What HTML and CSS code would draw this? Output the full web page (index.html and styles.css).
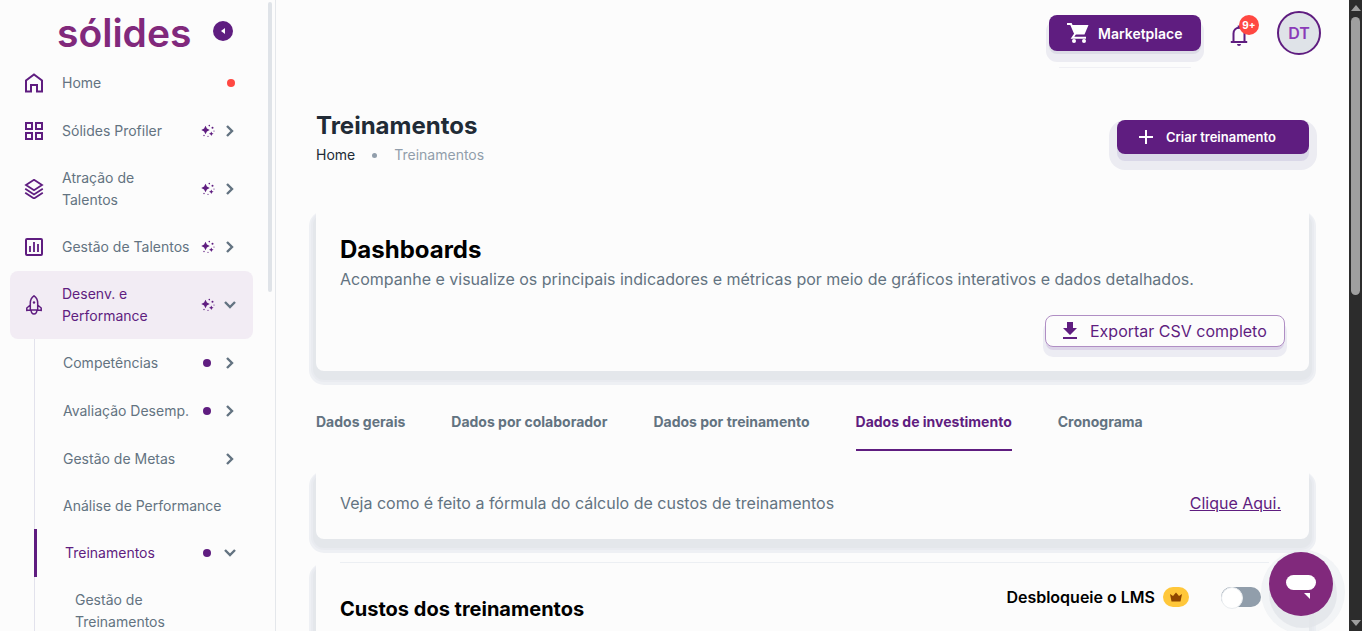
FILE: index.html
```html
<!DOCTYPE html>
<html lang="pt-BR">
<head>
<meta charset="utf-8">
<title>Treinamentos</title>
<link rel="stylesheet" href="styles.css">
</head>
<body>
<svg class="defs" aria-hidden="true">
  <symbol id="sparkle" viewBox="0 0 14 14">
    <path d="M4.500 1.800 5.900 4.600 8.700 6 5.900 7.400 4.500 10.200 3.100 7.400.3 6 3.100 4.600z" fill="currentColor"/>
    <path d="M10.300 7.500 11 9.100 12.600 9.800 11 10.500 10.300 12.100 9.600 10.500 8 9.800 9.600 9.100z" fill="currentColor"/>
    <circle cx="8.300" cy="1.600" r=".8" fill="currentColor"/><circle cx="11.500" cy="3.800" r="1" fill="currentColor"/><circle cx="3" cy="11.500" r=".7" fill="currentColor"/><circle cx="7" cy="12.300" r=".6" fill="currentColor"/><circle cx="13" cy="7" r=".6" fill="currentColor"/>
  </symbol>
  <symbol id="chevron" viewBox="0 0 14 14"><path d="m4 2 5 5-5 5" fill="none" stroke="currentColor" stroke-width="2.400"/></symbol>
</svg>

<aside class="sidebar">
  <div class="brand">
    <a class="logo" href="#">sólides</a>
    <button class="collapse" type="button" aria-label="Recolher menu"><svg viewBox="0 0 20 20"><path d="M12 7v6L8 10z" fill="#fff"/></svg></button>
  </div>
  <nav class="menu">
    <a class="item" href="#">
      <svg class="item-icon" viewBox="0 0 20 20"><path d="M2 18.500V7.500L10 1.500l8 6v11h-5v-6.500H7v6.500z" fill="none" stroke="currentColor" stroke-width="2"/></svg>
      <span class="label">Home</span><span class="dot dot-red"></span>
    </a>
    <a class="item" href="#">
      <svg class="item-icon" viewBox="0 0 20 20"><path d="M2 2h6v6H2zM12 2h6v6h-6zM2 12h6v6H2zM12 12h6v6h-6z" fill="none" stroke="currentColor" stroke-width="2"/></svg>
      <span class="label">Sólides Profiler</span><svg class="sparkle"><use href="#sparkle"/></svg><svg class="chevron"><use href="#chevron"/></svg>
    </a>
    <a class="item" href="#">
      <svg class="item-icon" viewBox="0 0 20 20"><path d="m10 .8 8 5.200-8 5.200-8-5.200zM1.200 9.800 10 15.500l8.800-5.700M1.200 13.800 10 19.500l8.800-5.700" fill="none" stroke="currentColor" stroke-width="1.800"/></svg>
      <span class="label">Atração de Talentos</span><svg class="sparkle"><use href="#sparkle"/></svg><svg class="chevron"><use href="#chevron"/></svg>
    </a>
    <a class="item" href="#">
      <svg class="item-icon" viewBox="0 0 20 20"><rect x="2" y="2" width="16" height="16" rx="1" fill="none" stroke="currentColor" stroke-width="2"/><path d="M6 9v6M10 5v10M14 7v8" stroke="currentColor" stroke-width="1.800"/></svg>
      <span class="label">Gestão de Talentos</span><svg class="sparkle"><use href="#sparkle"/></svg><svg class="chevron"><use href="#chevron"/></svg>
    </a>
    <a class="item active" href="#">
      <svg class="item-icon" viewBox="0 0 20 20"><g fill="none" stroke="currentColor" stroke-width="1.500"><path d="M10 .8C7.500 2.500 6.300 5 6.300 8v7h7.400V8C13.700 5 12.500 2.500 10 .8zM6.300 10 2.800 13v2.500l3.500-.5M13.700 10l3.500 3v2.500l-3.500-.5M7 15c.2 2.500 1.200 4 3 4s2.800-1.500 3-4"/></g><circle cx="10" cy="7.500" r="1.200" fill="currentColor"/></svg>
      <span class="label">Desenv. e Performance</span><svg class="sparkle"><use href="#sparkle"/></svg><svg class="chevron open"><use href="#chevron"/></svg>
    </a>
    <div class="submenu">
      <a class="item" href="#"><span class="label">Competências</span><span class="dot"></span><svg class="chevron"><use href="#chevron"/></svg></a>
      <a class="item" href="#"><span class="label">Avaliação Desemp.</span><span class="dot"></span><svg class="chevron"><use href="#chevron"/></svg></a>
      <a class="item" href="#"><span class="label">Gestão de Metas</span><svg class="chevron"><use href="#chevron"/></svg></a>
      <a class="item plain" href="#"><span class="label">Análise de Performance</span></a>
      <a class="item current" href="#"><span class="label">Treinamentos</span><span class="dot"></span><svg class="chevron open"><use href="#chevron"/></svg></a>
      <a class="item leaf" href="#"><span class="label">Gestão de Treinamentos</span></a>
    </div>
  </nav>
  <div class="side-thumb"></div>
</aside>

<main class="main">
  <header class="topbar">
    <button class="btn market" type="button"><svg class="cart" viewBox="0 0 22 20"><path d="M0 1h4l4.500 10.500" fill="none" stroke="#fff" stroke-width="2"/><path d="M4.500 2H21.500L17.500 11.500H8z" fill="#fff"/><path d="M8 11 5.500 14.800H19" fill="none" stroke="#fff" stroke-width="2"/><circle cx="7" cy="18" r="2" fill="#fff"/><circle cx="17" cy="18" r="2" fill="#fff"/></svg>Marketplace</button>
    <button class="bell" type="button" aria-label="Notificações"><svg viewBox="0 0 20 22"><path d="M4.500 17V9.500C4.500 6 6.800 3.800 10 3.800s5.500 2.200 5.500 5.700V17M1.800 18h16.400" fill="none" stroke="#5f1d80" stroke-width="2"/><path d="M8 20h4a2 2 0 0 1-4 0zM8.700 1.500h2.600v3H8.700z" fill="#5f1d80"/></svg><span class="count">9+</span></button>
    <button class="avatar" type="button">DT</button>
  </header>

  <section class="heading">
    <div>
      <h1>Treinamentos</h1>
      <nav class="crumbs"><a href="#">Home</a><span class="sep"></span><span>Treinamentos</span></nav>
    </div>
    <button class="btn create" type="button"><svg class="plus" viewBox="0 0 16 16"><path d="M8 1v14M1 8h14" stroke="#fff" stroke-width="2"/></svg>Criar treinamento</button>
  </section>

  <section class="card dash">
    <h2>Dashboards</h2>
    <p>Acompanhe e visualize os principais indicadores e métricas por meio de gráficos interativos e dados detalhados.</p>
    <button class="export" type="button"><svg class="download" viewBox="0 0 16 18"><path d="M5 0h6v6h4L8 13 1 6h4zM1 15h14v2H1z" fill="currentColor"/></svg>Exportar CSV completo</button>
  </section>

  <nav class="tabs">
    <a href="#">Dados gerais</a><a href="#">Dados por colaborador</a><a href="#">Dados por treinamento</a><a class="selected" href="#">Dados de investimento</a><a href="#">Cronograma</a>
  </nav>

  <section class="card formula">
    <p>Veja como é feito a fórmula do cálculo de custos de treinamentos</p>
    <a href="#">Clique Aqui.</a>
  </section>

  <section class="card costs">
    <h3>Custos dos treinamentos</h3>
    <label class="unlock" for="lms">Desbloqueie o LMS<span class="crown"><svg viewBox="0 0 12 10"><path d="M0 2 3 4 6 .5 9 4l3-2-1.500 7.500h-9z" fill="#8f4700"/></svg></span></label>
    <input class="switch" id="lms" type="checkbox">
  </section>
</main>

<div class="rail"><span class="arrow up"></span><span class="thumb"></span><span class="arrow down"></span></div>
<button class="chat" type="button" aria-label="Chat"><svg viewBox="0 0 64 64"><rect x="17" y="23" width="30" height="15" rx="7.500" fill="#fff"/><path d="M35 41h6v6z" fill="#fff"/></svg></button>
</body>
</html>
```
FILE: styles.css
```css
* { box-sizing: border-box; }
body { margin: 0; display: flex; height: 100vh; overflow: hidden; background: #fcfcfc; color: #637381; font-family: Inter, "Open Sans", sans-serif; font-size: 14px; }
h1, h2, h3, p { margin: 0; }
a { color: inherit; text-decoration: none; }
button { font: inherit; border: 0; padding: 0; background: none; cursor: pointer; }
svg { display: block; flex: none; }
.defs { position: absolute; width: 0; height: 0; }

.sidebar { position: relative; flex: none; width: 276px; border-right: 1px solid #e4e7eb; padding: 0 22px 0 10px; overflow: hidden; }
.brand { display: flex; align-items: center; justify-content: space-between; height: 59px; padding: 2px 20px 0 47px; }
.logo { padding-top: 4px; color: #81297c; font-size: 39px; line-height: 52px; font-weight: 600; }
.collapse { width: 20px; height: 20px; border-radius: 50%; background: #5f1d80; }
.item { display: flex; align-items: center; gap: 8px; min-height: 48px; padding: 12px 16px 12px 14px; border-radius: 8px; line-height: 22px; }
.item-icon { width: 20px; height: 20px; margin-right: 10px; color: #5f1d80; }
.label { flex: 1; }
.item .label { max-width: 132px; margin-right: auto; }
.sparkle { width: 14px; height: 14px; color: #5f1d80; }
.chevron { width: 14px; height: 14px; color: #637381; }
.chevron.open { transform: rotate(90deg); }
.dot { width: 8px; height: 8px; margin: 0 4px 0 2px; border-radius: 50%; background: #5f1d80; }
.dot-red { margin-right: 2px; background: #ff4842; }
.active { background: #f2ecf4; color: #5f1d80; }
.active .label { max-width: 100px; }
.item:nth-child(3) > .item-icon + .label { max-width: 100px; }
.submenu { margin-left: 24px; border-left: 1px solid #e2e2ec; }
.submenu .item { padding-left: 28px; border-radius: 0; }
.submenu .plain { min-height: 46px; }
.submenu .plain .label { max-width: none; }
.submenu .current { margin-left: -1px; border-left: 3px solid #5f1d80; color: #5f1d80; }
.submenu .leaf { padding-left: 40px; }
.submenu .leaf .label { max-width: 110px; }
.side-thumb { position: absolute; top: 2px; right: 3px; width: 4px; height: 46vh; border-radius: 2px; background: #dfe3e8; }

.main { flex: 1; min-width: 0; padding: 0 40px; }
.topbar { display: flex; justify-content: flex-end; align-items: center; height: 66px; margin-right: -12px; }
.btn { display: flex; align-items: center; border-radius: 8px; background: #5f1d80; color: #fff; font-weight: 600; }
.market { position: relative; width: 152px; height: 36px; padding-left: 18px; gap: 9px; box-shadow: 0 3px 0 #dcdce6, 0 8px 0 3px #ececf2; margin-right: 28px; }
.market::after { content: ""; position: absolute; left: 10px; right: 10px; top: 52px; height: 1px; background: #f0f0f4; }
.cart { width: 22px; height: 20px; }
.bell { position: relative; width: 20px; height: 22px; margin-right: 28px; }
.bell svg { margin-top: 2px; }
.count { position: absolute; left: 10px; top: -7px; width: 20px; height: 20px; border-radius: 50%; background: #ff4842; color: #fff; font-size: 10px; line-height: 20px; font-weight: 700; }
.avatar { width: 44px; height: 44px; border: 2px solid #5f1d80; border-radius: 50%; background: #dfe3e8; color: #8a3bb8; font-size: 16px; font-weight: 600; }

.heading { display: flex; justify-content: space-between; align-items: flex-start; padding-top: 44px; height: 145px; }
h1 { color: #212b36; font-size: 24px; line-height: 32px; font-weight: 700; }
.crumbs { display: flex; align-items: center; padding-top: 2px; line-height: 22px; color: #919eab; }
.crumbs a { color: #212b36; }
.sep { width: 5px; height: 5px; margin: 0 17px; border-radius: 50%; background: #919eab; }
.create { width: 192px; height: 34px; margin-top: 10px; padding-left: 21px; gap: 12px; font-size: 13px; box-shadow: 0 7px 0 0 #dad8e8, 0 8px 0 8px #ececf2; }
.plus { width: 16px; height: 16px; }

.card { position: relative; isolation: isolate; border-radius: 8px; background: #fcfcfc; box-shadow: 0 6px 0 3px #e4e7eb, 0 6px 0 5px #e9ebf0, 0 7px 0 7px #eef0f4; padding: 24px; }
.card::before { content: ""; position: absolute; inset: 0 0 50%; z-index: -1; background: #fcfcfc; }
.dash { display: flex; flex-direction: column; padding-top: 23px; }
h2 { color: #000; font-size: 24px; line-height: 32px; font-weight: 700; }
.card p { font-size: 16px; line-height: 26px; }
.export { display: flex; align-items: center; align-self: flex-end; gap: 12px; width: 240px; height: 32px; margin-top: 23px; padding-left: 16px; border: 1px solid #b08ec4; border-radius: 8px; background: #fcfcfc; color: #5f1d80; font-size: 16px; box-shadow: 0 4px 0 -1px #dcd4e8, 0 8px 0 2px #ececf3; }
.download { width: 16px; height: 18px; }

.tabs { display: flex; gap: 46px; margin-top: 32px; font-weight: 700; }
.tabs a { height: 48px; line-height: 38px; border-bottom: 2px solid transparent; white-space: nowrap; }
.tabs .selected { color: #5f1d80; border-color: #5f1d80; }
.formula { display: flex; justify-content: space-between; align-items: center; margin-top: 20px; padding: 19px 28px 23px 24px; }
.formula a { color: #5f1d80; font-size: 16px; text-decoration: underline; }
.costs { display: flex; align-items: flex-start; margin-top: 24px; min-height: 200px; }
.costs::after { content: ""; position: absolute; top: -1px; left: 24px; right: 40px; height: 1px; background: #eceff3; }
h3 { flex: 1; color: #000; font-size: 20px; line-height: 44px; font-weight: 700; }
.unlock { display: flex; align-items: center; gap: 8px; height: 20px; color: #000; font-size: 16px; font-weight: 600; }
.crown { display: flex; align-items: center; justify-content: center; width: 26px; height: 20px; border-radius: 10px; background: #ffc73a; }
.crown svg { width: 12px; height: 10px; }
.switch { appearance: none; flex: none; width: 40px; height: 20px; margin: 0 24px 0 32px; border-radius: 10px; background: #919eab; }
.switch::before { content: ""; display: block; width: 20px; height: 20px; border: 1px solid #e9ecef; border-radius: 50%; background: #fff; }

.rail { flex: none; display: flex; flex-direction: column; align-items: center; width: 13px; padding: 5px 0; background: #2c2c2c; }
.arrow { border: 5px solid transparent; }
.up { border-top: 0; border-bottom: 6px solid #9f9f9f; }
.down { border-bottom: 0; border-top: 6px solid #9f9f9f; margin-top: auto; }
.thumb { width: 9px; height: 44vh; margin-top: 6px; border-radius: 5px; background: #9f9f9f; }
.chat { position: fixed; right: 29px; bottom: 15px; width: 64px; height: 64px; border-radius: 50%; background: #81297c; box-shadow: 2px 10px 0 2px #e2e5eace, 2px 8px 0 10px #e8ebf080; }
```
